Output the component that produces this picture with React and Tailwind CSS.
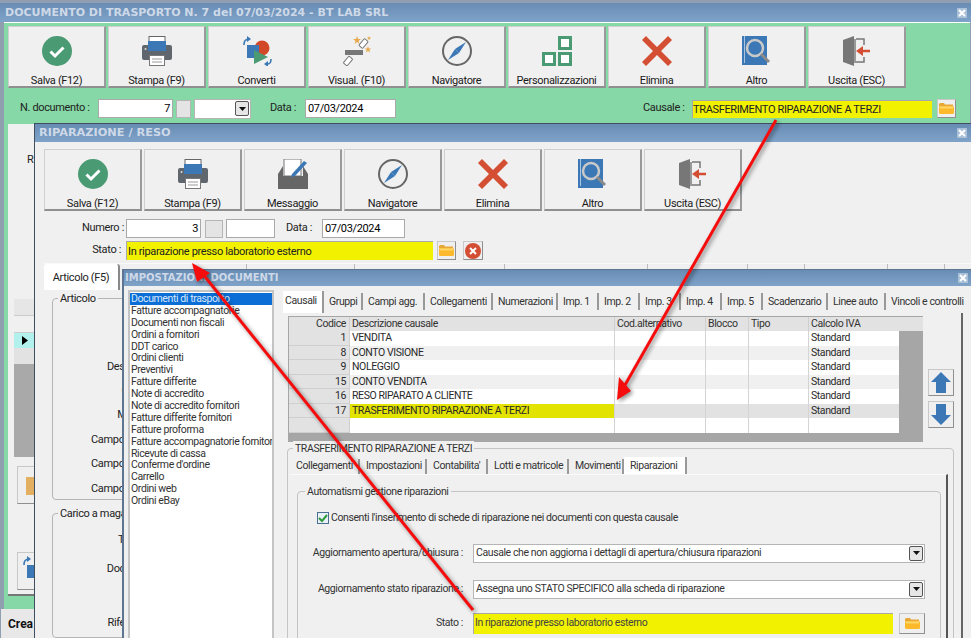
import React from "react"

const font = "font-['Roboto',sans-serif]"

function CheckIcon() {
  return (
    <svg width="30" height="30" viewBox="0 0 30 30">
      <circle cx="15" cy="15" r="15" fill="#4a9a74" />
      <path d="M8.5 15.5l4.5 4.5 8.5-8.5" fill="none" stroke="#fff" strokeWidth="3" />
    </svg>
  )
}

function PrinterIcon() {
  return (
    <svg width="30" height="30" viewBox="0 0 30 30">
      <rect x="7" y="0.500" width="16" height="7" fill="#fff" stroke="#666" strokeWidth="1" />
      <path d="M2 9h26a2 2 0 0 1 2 2v11a2 2 0 0 1-2 2h-5v-5H7v5H2a2 2 0 0 1-2-2V11a2 2 0 0 1 2-2z" fill="#5f666d" />
      <rect x="6" y="5" width="18" height="10" fill="#3b78b5" />
      <rect x="7.500" y="19.500" width="15" height="10" fill="#fff" stroke="#777" strokeWidth="1" />
      <path d="M10 23h10M10 26h10" stroke="#999" strokeWidth="1" />
      <circle cx="3.500" cy="13" r="1" fill="#ddd" />
    </svg>
  )
}

function ConvertIcon() {
  return (
    <svg width="30" height="30" viewBox="0 0 30 30">
      <circle cx="20" cy="12" r="7.500" fill="#d2492a" />
      <rect x="5" y="9" width="12" height="13" fill="#3b78b5" />
      <path d="M12 14l14 7-14 7z" fill="#4a9a74" />
      <path d="M2 9c0-4 1-5 4-6" fill="none" stroke="#3b78b5" strokeWidth="1.600" />
      <path d="M5 0l4 3-4 3z" fill="#3b78b5" />
      <path d="M29 23c0 4-1 5-4 5" fill="none" stroke="#3b78b5" strokeWidth="1.600" />
      <path d="M26 25l-4 3 4 3z" fill="#3b78b5" />
    </svg>
  )
}

function WandIcon() {
  return (
    <svg width="32" height="30" viewBox="0 0 32 30">
      <path d="M16 0l1 3 3 0-2.500 2 1 3-2.500-2-2.500 2 1-3L12 3l3 0z" fill="#e8a94c" />
      <path d="M27 10l.8 2.500 2.500 0-2 1.500.8 2.500-2.100-1.500-2.100 1.500.8-2.500-2-1.500 2.500 0z" fill="#e8a94c" />
      <path d="M28 0l.6 1.500 1.500 0-1.200 1 .5 1.500-1.400-1-1.400 1 .5-1.500-1.200-1 1.500 0z" fill="#e8a94c" />
      <rect x="20" y="3" width="5" height="9" rx="1" transform="rotate(40 22.500 7.500)" fill="#fff" stroke="#777" />
      <rect x="4" y="14" width="18" height="5" fill="#777" />
      <rect x="4.500" y="20.500" width="5" height="9" rx="1" transform="rotate(40 7 25)" fill="#fff" stroke="#777" />
    </svg>
  )
}

function CompassIcon() {
  return (
    <svg width="30" height="30" viewBox="0 0 30 30">
      <circle cx="15" cy="15" r="14" fill="none" stroke="#666" strokeWidth="2" />
      <path d="M24 6L17 17l-4-4z" fill="#3b78b5" />
      <path d="M6 24l7-11 4 4z" fill="#3b78b5" />
    </svg>
  )
}

function SquaresIcon() {
  return (
    <svg width="30" height="30" viewBox="0 0 30 30">
      <rect x="17.500" y="1.500" width="11" height="11" fill="#fff" stroke="#4a9a74" strokeWidth="3" />
      <rect x="1.500" y="17.500" width="11" height="11" fill="#fff" stroke="#4a9a74" strokeWidth="3" />
      <rect x="17.500" y="17.500" width="11" height="11" fill="#fff" stroke="#4a9a74" strokeWidth="3" />
    </svg>
  )
}

function CrossIcon() {
  return (
    <svg width="30" height="30" viewBox="0 0 30 30">
      <path d="M4 0l11 11L26 0l4 4-11 11 11 11-4 4-11-11L4 30l-4-4 11-11L0 4z" fill="#d34e33" />
    </svg>
  )
}

function BookIcon() {
  return (
    <svg width="30" height="30" viewBox="0 0 30 30">
      <rect x="0" y="0" width="25" height="29" fill="#3b78b5" />
      <rect x="2" y="0" width="1" height="27" fill="#a7c4e0" />
      <circle cx="13" cy="12" r="8" fill="#3b78b5" stroke="#c9c9c9" strokeWidth="2.500" />
      <path d="M19 18l8 8" stroke="#8a8a8a" strokeWidth="3" />
    </svg>
  )
}

function ExitIcon() {
  return (
    <svg width="30" height="30" viewBox="0 0 30 30">
      <path d="M14 3h8v6M22 21v5h-8" fill="none" stroke="#777" strokeWidth="1.500" />
      <path d="M1 4l11-4v30L1 26z" fill="#777" />
      <rect x="12" y="3" width="2" height="24" fill="#999" />
      <path d="M20 15h8" stroke="#d34e33" strokeWidth="2.500" />
      <path d="M14 15l7-5v10z" fill="#d34e33" />
    </svg>
  )
}

function MessageIcon() {
  return (
    <svg width="30" height="30" viewBox="0 0 30 30">
      <path d="M6 0h17v17H6z" fill="#fff" stroke="#777" />
      <path d="M0 15l5-8v10h20V7l5 8v15H0z" fill="#666" />
      <path d="M14 15L26 2l3 2-12 13-4 1z" fill="#3b78b5" />
    </svg>
  )
}

function FolderIcon() {
  return (
    <svg width="15" height="11" viewBox="0 0 15 11">
      <path d="M1 0h4l1 1.500h8v2H0V1z" fill="#e8a838" />
      <rect x="0" y="3" width="15" height="8" rx="1.500" fill="#fbb92b" />
      <rect x="1" y="3.500" width="13" height="2" fill="#ffd667" />
    </svg>
  )
}

function ToolButton({ icon, label }) {
  return (
    <div className="w-[98px] h-[62px] flex flex-col items-center pt-[9px] bg-[#f0f0f0] border border-[#cfcfcf] border-b-2 border-r-2 border-b-[#8f8f8f] border-r-[#9a9a9a]">
      <div className="h-[30px] flex items-center justify-center">{icon}</div>
      <span className="mt-[7px] text-[11px] leading-[15px] text-[#1a1a1a] whitespace-nowrap">{label}</span>
    </div>
  )
}

function Input({ className, children }) {
  return (
    <div className={`h-[19px] flex items-center bg-white border border-[#a9a9a9] text-[11px] leading-[15px] text-black px-[2px] ${className}`}>
      {children}
    </div>
  )
}

function YellowField({ className, children }) {
  return (
    <div className={`flex bg-[#f2f200] border border-[#a9a9a9] border-r-0 border-b-0 leading-[15px] text-[#222] ${className}`}>
      {children}
    </div>
  )
}

function SmallButton({ className, children }) {
  return (
    <div className={`flex items-center justify-center bg-[#efefef] border border-[#c8c8c8] border-b-[#8f8f8f] border-r-[#8f8f8f] ${className}`}>
      {children}
    </div>
  )
}

function DropArrow() {
  return (
    <div className="w-[14px] h-[15px] flex items-center justify-center bg-[#e6e6e6] border border-[#555] rounded-[2px]">
      <svg width="7" height="4" viewBox="0 0 7 4"><path d="M0 0h7L3.500 4z" fill="#111" /></svg>
    </div>
  )
}

function TitleBar({ title, className, h, size }) {
  return (
    <div className={`flex items-center justify-between bg-gradient-to-b from-[#688cb4] to-[#7fa3c8] ${h} ${className}`}>
      <span className={`font-['DejaVu_Sans',sans-serif] font-bold leading-[16px] tracking-normal text-[#ced9e8] whitespace-nowrap ${size}`}>{title}</span>
      <span className="w-[10px] h-[10px] mr-[3px] bg-[#a9c0d8] flex items-center justify-center">
        <svg width="8" height="8" viewBox="0 0 8 8"><path d="M1 1l6 6M7 1L1 7" stroke="#fff" strokeWidth="2" /></svg>
      </span>
    </div>
  )
}

const tabs3 = [
  { label: "Causali", w: "w-[41px]", active: true },
  { label: "Gruppi", w: "w-[39px]" },
  { label: "Campi agg.", w: "w-[62px]" },
  { label: "Collegamenti", w: "w-[68px]" },
  { label: "Numerazioni", w: "w-[65px]" },
  { label: "Imp. 1", w: "w-[41px]" },
  { label: "Imp. 2", w: "w-[41px]" },
  { label: "Imp. 3", w: "w-[41px]" },
  { label: "Imp. 4", w: "w-[41px]" },
  { label: "Imp. 5", w: "w-[41px]" },
  { label: "Scadenzario", w: "w-[65px]" },
  { label: "Linee auto", w: "w-[58px]" },
  { label: "Vincoli e controlli", w: "w-[79px]", last: true },
]

const innerTabs = [
  { label: "Collegamenti", w: "w-[70px]" },
  { label: "Impostazioni", w: "w-[67px]" },
  { label: "Contabilita'", w: "w-[61px]" },
  { label: "Lotti e matricole", w: "w-[81px]" },
  { label: "Movimenti", w: "w-[55px]" },
  { label: "Riparazioni", w: "w-[63px]", active: true },
]

const documents = [
  "Documenti di trasporto",
  "Fatture accompagnatorie",
  "Documenti non fiscali",
  "Ordini a fornitori",
  "DDT carico",
  "Ordini clienti",
  "Preventivi",
  "Fatture differite",
  "Note di accredito",
  "Note di accredito fornitori",
  "Fatture differite fornitori",
  "Fatture proforma",
  "Fatture accompagnatorie fornitori",
  "Ricevute di cassa",
  "Conferme d'ordine",
  "Carrello",
  "Ordini web",
  "Ordini eBay",
]

const causali = [
  { code: "1", name: "VENDITA" },
  { code: "8", name: "CONTO VISIONE", alt: true },
  { code: "9", name: "NOLEGGIO" },
  { code: "15", name: "CONTO VENDITA", alt: true },
  { code: "16", name: "RESO RIPARATO A CLIENTE" },
  { code: "17", name: "TRASFERIMENTO RIPARAZIONE A TERZI", selected: true },
  { code: "", name: "", empty: true },
]

function GridRow({ row }) {
  const bg = row.selected ? "bg-[#e2e2e2]" : row.alt ? "bg-[#f0f0f0]" : "bg-white"
  const cell = `border-r border-[#d4d4d4] ${bg}`
  return (
    <div className="flex h-[14.500px] leading-[14px] text-[#2a2a2a]">
      <div className="w-[61px] text-right pr-[3px] bg-[#e2e2e2] border-r border-b border-[#cfcfcf]">{row.code}</div>
      <div className={`w-[265px] pl-[2px] border-r border-[#d4d4d4] ${row.selected ? "bg-[#e3e300]" : bg}`}>{row.name}</div>
      <div className={`w-[91px] ${cell}`} />
      <div className={`w-[43px] ${cell}`} />
      <div className={`w-[60px] ${cell}`} />
      <div className={`w-[90px] pl-[2px] ${bg}`}>{row.empty ? "" : "Standard"}</div>
    </div>
  )
}

function Legend({ className, children }) {
  return (
    <span className={`absolute top-[-8px] bg-[#f0f0f0] px-[2px] leading-[15px] whitespace-nowrap ${className}`}>
      {children}
    </span>
  )
}

function BackWindow() {
  return (
    <div className="absolute left-0 top-0 w-[971px] h-[638px] flex flex-col bg-[#8f9fb0]">
      <TitleBar title="DOCUMENTO DI TRASPORTO N. 7 del 07/03/2024 - BT LAB SRL" h="h-[19px] mt-[3px]" size="text-[11px]" className="pl-[5px] pr-[1px]" />
      <div className="ml-[4px] mr-[1px] h-[587px] bg-[#86d8a6] flex flex-col border-t border-white px-[4px]">
        <div className="flex gap-[2px] mt-[3px]">
          <ToolButton icon={<CheckIcon />} label="Salva (F12)" />
          <ToolButton icon={<PrinterIcon />} label="Stampa (F9)" />
          <ToolButton icon={<ConvertIcon />} label="Converti" />
          <ToolButton icon={<WandIcon />} label="Visual. (F10)" />
          <ToolButton icon={<CompassIcon />} label="Navigatore" />
          <ToolButton icon={<SquaresIcon />} label="Personalizzazioni" />
          <ToolButton icon={<CrossIcon />} label="Elimina" />
          <ToolButton icon={<BookIcon />} label="Altro" />
          <ToolButton icon={<ExitIcon />} label="Uscita (ESC)" />
        </div>
        <div className="flex items-center mt-[11px] h-[19px] text-[11px] text-[#222]">
          <span className="ml-[12px] w-[78px] whitespace-nowrap">N. documento :</span>
          <Input className="w-[75px] justify-end">7</Input>
          <div className="w-[15px] h-[18px] ml-[3px] bg-[#e4e4e4] border border-[#b5b5b5]" />
          <div className="w-[57px] h-[20px] ml-[3px] bg-white border border-[#b5b5b5] flex items-center justify-end pr-[1px]"><DropArrow /></div>
          <span className="ml-[19px] w-[35px] whitespace-nowrap">Data :</span>
          <Input className="w-[91px]">07/03/2024</Input>
          <span className="ml-[247px] w-[49px] whitespace-nowrap">Causale :</span>
          <YellowField className="w-[240px] h-[18px] items-center text-[11px]">TRASFERIMENTO RIPARAZIONE A TERZI</YellowField>
          <SmallButton className="w-[19px] h-[19px] ml-[5px]"><FolderIcon /></SmallButton>
        </div>
        <div className="mt-[6px] flex-1 mb-[13px] bg-[#f0f0f0] border-b-2 border-[#777] flex flex-col">
          <div className="mt-[28px] ml-[19px] text-[11px] leading-[16px] text-[#222]">R</div>
          <div className="mt-[131px] ml-[6px] h-[158px] bg-[#a9a9a9] flex flex-col">
            <div className="h-[17px] bg-[#e6e6e6] border-b border-[#ccc]" />
            <div className="h-[17px] bg-[#f0f0f0] border-b border-[#ccc]" />
            <div className="h-[15px] bg-[#b2f0ee] flex items-center pl-[8px]">
              <svg width="6" height="9" viewBox="0 0 6 9"><path d="M0 0l6 4.500L0 9z" fill="#000" /></svg>
            </div>
            <div className="h-[16px] bg-[#e2e2e2]" />
          </div>
          <SmallButton className="mt-[9px] ml-[9px] w-[40px] h-[38px]">
            <svg width="24" height="22" viewBox="0 0 24 22"><path d="M1 3h9l2 3h11v15H1z" fill="#e3b062" /><circle cx="14" cy="15" r="5" fill="#4a9a74" /></svg>
          </SmallButton>
          <SmallButton className="mt-[48px] ml-[9px] w-[40px] h-[38px]"><ConvertIcon /></SmallButton>
        </div>
      </div>
      <div className="ml-[1px] mr-[1px] flex-1 bg-[#e8e8e8] flex items-center pl-[7px] text-[12px] font-bold tracking-normal text-[#111]">Crea</div>
    </div>
  )
}

const articleLabels = [
  { label: "Articolo :", mt: "mt-[34px]" },
  { label: "Descrizione :", mt: "mt-[11px]" },
  { label: "Quantità :", mt: "mt-[9px]" },
  { label: "Matricola :", mt: "mt-[9px]" },
  { label: "Campo libero 1 :", mt: "mt-[10px]" },
  { label: "Campo libero 2 :", mt: "mt-[9px]" },
  { label: "Campo libero 3 :", mt: "mt-[10px]" },
]

const stockLabels = [
  { label: "Tipologia :", mt: "mt-[18px]" },
  { label: "Documento :", mt: "mt-[14px]" },
  { label: "Riferimento :", mt: "mt-[39px]" },
]

function RepairWindow() {
  return (
    <div className="absolute left-[34px] top-[123px] w-[937px] h-[515px] flex flex-col bg-[#f0f0f0] border-l border-t border-[#3f4f60]">
      <TitleBar title="RIPARAZIONE / RESO" h="h-[19px]" size="text-[11.300px]" className="pl-[4px] pr-[1px]" />
      <div className="flex gap-[2px] mt-[7px] ml-[9px]">
        <ToolButton icon={<CheckIcon />} label="Salva (F12)" />
        <ToolButton icon={<PrinterIcon />} label="Stampa (F9)" />
        <ToolButton icon={<MessageIcon />} label="Messaggio" />
        <ToolButton icon={<CompassIcon />} label="Navigatore" />
        <ToolButton icon={<CrossIcon />} label="Elimina" />
        <ToolButton icon={<BookIcon />} label="Altro" />
        <ToolButton icon={<ExitIcon />} label="Uscita (ESC)" />
      </div>
      <div className="flex items-center mt-[8px] h-[19px] text-[11px] text-[#222]">
        <span className="w-[91px] text-right pr-[2px] whitespace-nowrap">Numero :</span>
        <Input className="w-[75px] justify-end">3</Input>
        <div className="w-[18px] h-[18px] ml-[4px] bg-[#e4e4e4] border border-[#b5b5b5]" />
        <Input className="w-[49px] ml-[3px]" />
        <span className="ml-[11px] w-[36px] whitespace-nowrap">Data :</span>
        <Input className="w-[83px]">07/03/2024</Input>
      </div>
      <div className="flex items-center mt-[3px] h-[19px] text-[11px] text-[#222]">
        <span className="w-[91px] text-right pr-[5px] whitespace-nowrap">Stato :</span>
        <YellowField className="w-[307px] h-[19px] items-center pl-[1px] text-[11px]">In riparazione presso laboratorio esterno</YellowField>
        <SmallButton className="w-[19px] h-[19px] ml-[4px]"><FolderIcon /></SmallButton>
        <SmallButton className="w-[20px] h-[19px] ml-[7px]">
          <svg width="16" height="16" viewBox="0 0 16 16"><circle cx="8" cy="8" r="8" fill="#d34e33" /><path d="M5 5l6 6M11 5l-6 6" stroke="#fff" strokeWidth="2" /></svg>
        </SmallButton>
      </div>
      <div className="flex mt-[3px] h-[26px] ml-[9px] border-t border-[#fafafa]">
        <div className="w-[76px] h-[26px] bg-white rounded-t-[3px] border-r-2 border-[#888] flex items-center justify-center pt-[3px] text-[11px] text-[#222]">Articolo (F5)</div>
        <div className="w-[127px] h-[5px] border-r border-[#bbb]" />
        <div className="w-[108px] h-[5px] border-r border-[#bbb]" />
        <div className="w-[150px] h-[5px] border-r border-[#bbb]" />
        <div className="w-[143px] h-[5px] border-r border-[#bbb]" />
        <div className="w-[100px] h-[5px] border-r border-[#bbb]" />
        <div className="w-[57px] h-[5px] border-r border-[#bbb]" />
        <div className="w-[83px] h-[5px] border-r border-[#bbb]" />
        <div className="w-[57px] h-[5px] border-r border-[#bbb]" />
      </div>
      <div className="ml-[17px] mt-[9px] h-[211px] w-[180px] relative border border-[#b5b5b5] rounded-[4px] flex flex-col items-end pr-[66px] text-[11px] leading-[15px] text-[#222] whitespace-nowrap">
        <Legend className="left-[5px] text-[11px] text-[#222]">Articolo</Legend>
        {articleLabels.map((l) => (
          <div key={l.label} className={l.mt}>{l.label}</div>
        ))}
      </div>
      <div className="ml-[17px] mt-[13px] h-[130px] w-[180px] relative border border-[#b5b5b5] rounded-[4px] flex flex-col items-end pr-[66px] text-[11px] leading-[15px] text-[#222] whitespace-nowrap">
        <Legend className="left-[5px] text-[11px] text-[#222]">Carico a magazzino</Legend>
        {stockLabels.map((l) => (
          <div key={l.label} className={l.mt}>{l.label}</div>
        ))}
      </div>
    </div>
  )
}

function SettingsWindow() {
  return (
    <div className="absolute left-[122px] top-[269px] w-[849px] h-[369px] flex flex-col bg-[#f0f0f0] border-l-2 border-t border-[#5d7590] text-[10.500px] tracking-[-0.4px]">
      <TitleBar title="IMPOSTAZIONI DOCUMENTI" h="h-[17px]" size="text-[10px]" className="pl-[1px]" />
      <div className="flex flex-1">
        <div className="w-[146px] ml-[4px] mt-[4px] bg-white border-2 border-[#c4c4c4] border-b-0 pt-[1px] flex flex-col overflow-hidden">
          {documents.map((d, i) => (
            <div key={d} className={`h-[11.900px] pl-[1px] leading-[12px] whitespace-nowrap ${i === 0 ? "bg-[#0a6ed6] text-[#d8e8fa]" : "text-[#333]"}`}>{d}</div>
          ))}
        </div>
        <div className="ml-[9px] flex-1 flex flex-col min-w-0">
          <div className="flex h-[22px] mt-[5px] leading-[14px] text-[#333] whitespace-nowrap">
            {tabs3.map((t) => (
              <div key={t.label} className={`${t.w} ${t.last ? "" : "border-r-2 border-[#999]"} ${t.active ? "bg-white h-[22px] pt-[3px] pl-[2px]" : "h-[17px] mt-[2px] pt-[2px] pl-[5px]"}`}>{t.label}</div>
            ))}
          </div>
          <div className="flex-1 flex flex-col mr-[8px] border-r-2 border-[#666] pt-[3px]">
            <div className="flex pl-[5px] h-[133px]">
              <div className="w-[635px] h-[126px] bg-[#a6a6a6] flex flex-col pl-[1px] pt-[1px]">
                <div className="flex h-[14px] leading-[14px] text-[#333] bg-[#e2e2e2]">
                  <div className="w-[61px] text-right pr-[3px] border-r border-[#cfcfcf]">Codice</div>
                  <div className="w-[265px] pl-[2px] border-r border-[#cfcfcf]">Descrizione causale</div>
                  <div className="w-[91px] pl-[2px] border-r border-[#cfcfcf]">Cod.alternativo</div>
                  <div className="w-[43px] pl-[2px] border-r border-[#cfcfcf]">Blocco</div>
                  <div className="w-[60px] pl-[2px] border-r border-[#cfcfcf]">Tipo</div>
                  <div className="w-[90px] pl-[2px]">Calcolo IVA</div>
                </div>
                {causali.map((r) => (
                  <GridRow key={r.code || "new"} row={r} />
                ))}
              </div>
              <div className="ml-[5px] mt-[53px] flex flex-col gap-[5px]">
                <SmallButton className="w-[26px] h-[27px]">
                  <svg width="20" height="21" viewBox="0 0 20 21"><path d="M10 0l10 10h-5v11H5V10H0z" fill="#3b78b5" /></svg>
                </SmallButton>
                <SmallButton className="w-[26px] h-[27px]">
                  <svg width="20" height="21" viewBox="0 0 20 21"><path d="M10 21L0 11h5V0h10v11h5z" fill="#3b78b5" /></svg>
                </SmallButton>
              </div>
            </div>
            <div className="relative w-[667px] h-[191px] ml-[4px] mt-[-1px] border border-[#c4c4c4] rounded-t-[4px] flex flex-col pl-[2px] pr-[5px]">
              <Legend className="left-[5px] text-[#333]">TRASFERIMENTO RIPARAZIONE A TERZI</Legend>
              <div className="flex h-[19px] mt-[8px] leading-[14px] text-[#333] whitespace-nowrap">
                {innerTabs.map((t) => (
                  <div key={t.label} className={`${t.w} border-r-2 border-[#999] pl-[6px] ${t.active ? "bg-white pt-[2px]" : "h-[15px] mt-[2px]"}`}>{t.label}</div>
                ))}
              </div>
              <div className="flex-1 border-t border-[#fafafa] border-r-2 border-r-[#555] pl-[7px] pr-[5px]">
                <div className="relative h-[170px] mt-[16px] border border-[#c4c4c4] rounded-t-[4px] flex flex-col leading-[14px] text-[#333] whitespace-nowrap">
                  <Legend className="left-[7px]">Automatismi gestione riparazioni</Legend>
                  <div className="flex items-center gap-[2px] mt-[19px] ml-[19px] h-[14px]">
                    <div className="w-[12px] h-[12px] bg-[#e8f0f8] border border-[#4b6f90] flex items-center justify-center">
                      <svg width="10" height="9" viewBox="0 0 10 9"><path d="M1 4l3 3 5-6" fill="none" stroke="#2e9a3c" strokeWidth="2" /></svg>
                    </div>
                    <span>Consenti l'inserimento di schede di riparazione nei documenti con questa causale</span>
                  </div>
                  <div className="flex items-center mt-[19px] h-[18px]">
                    <span className="w-[171px] text-right pr-[6px]">Aggiornamento apertura/chiusura :</span>
                    <div className="w-[452px] h-[19px] ml-[4px] bg-white border border-[#b5b5b5] flex items-center justify-between pl-[2px] pr-[1px]">
                      <span>Causale che non aggiorna i dettagli di apertura/chiusura riparazioni</span>
                      <DropArrow />
                    </div>
                  </div>
                  <div className="flex items-center mt-[18px] h-[18px]">
                    <span className="w-[171px] text-right pr-[6px]">Aggiornamento stato riparazione :</span>
                    <div className="w-[452px] h-[19px] ml-[4px] bg-white border border-[#b5b5b5] flex items-center justify-between pl-[2px] pr-[1px]">
                      <span>Assegna uno STATO SPECIFICO alla scheda di riparazione</span>
                      <DropArrow />
                    </div>
                  </div>
                  <div className="flex items-start mt-[15px]">
                    <span className="w-[171px] text-right pr-[6px] mt-[3px]">Stato :</span>
                    <YellowField className="w-[420px] h-[21px] ml-[4px] text-[#444] pl-[1px] pt-[1px]">In riparazione presso laboratorio esterno</YellowField>
                    <SmallButton className="w-[26px] h-[21px] ml-[6px]"><FolderIcon /></SmallButton>
                  </div>
                </div>
              </div>
            </div>
          </div>
        </div>
      </div>
    </div>
  )
}

function Arrows() {
  return (
    <svg className="absolute left-0 top-0 drop-shadow-[2px_2px_2px_rgba(0,0,0,0.45)]" width="971" height="638" viewBox="0 0 971 638">
      <line x1="776" y1="120" x2="625" y2="385" stroke="#f50d0d" strokeWidth="3" />
      <path d="M617 400L619 377 631 391z" fill="#f50d0d" />
      <line x1="473" y1="610" x2="202" y2="273" stroke="#f50d0d" strokeWidth="3" />
      <path d="M192 263L210 273 197 282z" fill="#f50d0d" />
    </svg>
  )
}

export default function App() {
  return (
    <div className={`relative w-[971px] h-[638px] overflow-hidden tracking-[-0.35px] ${font}`}>
      <BackWindow />
      <RepairWindow />
      <SettingsWindow />
      <Arrows />
    </div>
  )
}
